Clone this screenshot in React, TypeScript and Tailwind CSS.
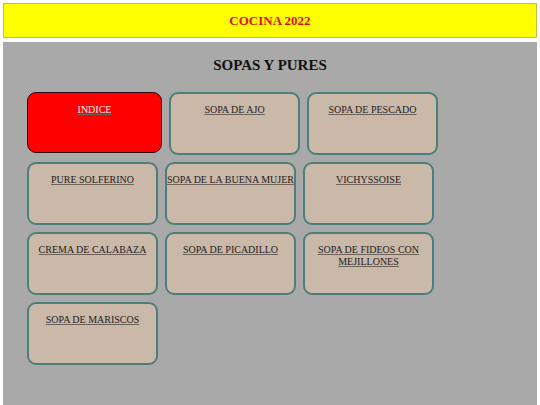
const rows: string[][] = [
  ['INDICE', 'SOPA DE AJO', 'SOPA DE PESCADO'],
  ['PURE SOLFERINO', 'SOPA DE LA BUENA MUJER', 'VICHYSSOISE'],
  ['CREMA DE CALABAZA', 'SOPA DE PICADILLO', 'SOPA DE FIDEOS CON MEJILLONES'],
  ['SOPA DE MARISCOS'],
]

function Card({ name }: { name: string }) {
  const isIndex = name === 'INDICE'
  const noWrap = name === 'SOPA DE LA BUENA MUJER'
  return (
    <a
      href="#"
      className={`block text-center text-[10px] leading-[11.5px] rounded-[9px] ${
        isIndex
          ? 'w-[135px] h-[61px] bg-[#ff0000] border-[1.5px] border-[#2a0a0a] text-[#fff2f2] pt-[11px]'
          : 'w-[131px] h-[63px] bg-[#cab9a9] border-2 border-[#4e7e7a] text-[#24201d] pt-[10px]'
      }`}
      style={{ fontFamily: '"Liberation Serif", serif' }}
    >
      <span className={`underline decoration-[#6e6258] ${noWrap ? 'whitespace-nowrap -mx-[3px] inline-block' : ''}`}>{name}</span>
    </a>
  )
}

export default function App() {
  return (
    <div className="bg-white w-[540px] h-[405px] overflow-hidden p-[3px]" style={{ fontFamily: '"Liberation Serif", serif' }}>
      {/* Header */}
      <div className="h-[35px] bg-[#ffff00] border border-[#c4bc52] flex items-center justify-center">
        <h1 className="font-bold text-[13px] text-[#e01010]">COCINA 2022</h1>
      </div>

      {/* Section */}
      <div className="mt-[4px] h-[370px] bg-[#a9a9a9] pl-[24px]">
        <h2 className="pt-[12px] h-[50px] text-center font-bold text-[15px] text-[#111] pr-[24px]">SOPAS Y PURES</h2>
        <div className="flex flex-col gap-[7px]">
          {rows.map((row, i) => (
            <div key={i} className="flex gap-[7px]">
              {row.map(n => (
                <Card key={n} name={n} />
              ))}
            </div>
          ))}
        </div>
      </div>
    </div>
  )
}
